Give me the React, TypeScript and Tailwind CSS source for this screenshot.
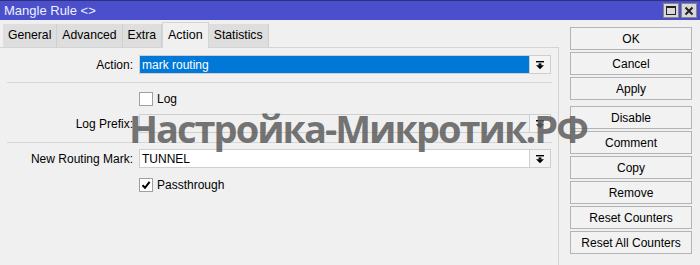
import React from "react";

const DropIcon = () => (
  <svg width="10" height="10" viewBox="0 0 10 10">
    <rect x="1" y="1" width="8" height="1.4" fill="#000" />
    <rect x="3.6" y="3.4" width="2.8" height="2" fill="#000" />
    <polygon points="1,5.2 9,5.2 5,9.2" fill="#000" />
  </svg>
);

const Field = ({ value, variant }: { value?: string; variant: "blue" | "white" | "disabled" }) => {
  const bg =
    variant === "blue"
      ? "bg-[#0078d7] text-white"
      : variant === "white"
      ? "bg-white text-black"
      : "bg-[#f0f0f0] text-black";
  return (
    <div className="flex h-[19px]">
      <div className={`w-[391px] h-[19px] border border-[#cfcfcf] flex items-center pl-[2px] ${bg}`}>
        {value}
      </div>
      <div className="w-[21px] h-[19px] border border-l-0 border-[#cfcfcf] bg-[#f4f4f4] flex items-center justify-center">
        <DropIcon />
      </div>
    </div>
  );
};

const Check = ({ checked }: { checked?: boolean }) => (
  <div className="w-[14px] h-[14px] bg-white border border-[#a0a0a0] flex items-center justify-center">
    {checked && (
      <svg width="10" height="10" viewBox="0 0 10 10">
        <path d="M1.5 5.2 L4 7.8 L8.6 1.8" stroke="#000" strokeWidth="2" fill="none" />
      </svg>
    )}
  </div>
);

const Btn = ({ label }: { label: string }) => (
  <div className="w-[122px] h-[23px] border border-[#b4b4b4] bg-[#f2f2f2] flex items-center justify-center text-black">
    {label}
  </div>
);

export default function App() {
  const tabs = ["General", "Advanced", "Extra", "Action", "Statistics"];
  return (
    <div
      className="w-[700px] h-[265px] bg-[#f0f0f0] relative overflow-hidden text-[12px] text-black"
      style={{ fontFamily: '"Liberation Sans", Arial, sans-serif' }}
    >
      {/* Title bar */}
      <div className="h-[20px] bg-[#4b4fcb] border-t border-[#2e2f80] flex items-center justify-between">
        <span className="pl-[4px] text-[13px] text-[#eef0ff]">Mangle Rule &lt;&gt;</span>
        <div className="flex gap-[2px] pr-[3px]">
          <div className="w-[16px] h-[15px] bg-[#d8d8d8] border border-[#888] flex items-center justify-center">
            <div className="w-[10px] h-[9px] border border-[#222] border-t-2"></div>
          </div>
          <div className="w-[16px] h-[15px] bg-[#d8d8d8] border border-[#888] flex items-center justify-center">
            <svg width="10" height="10" viewBox="0 0 10 10">
              <path d="M1.5 1.5 L8.5 8.5 M8.5 1.5 L1.5 8.5" stroke="#222" strokeWidth="2" />
            </svg>
          </div>
        </div>
      </div>

      <div className="flex h-[245px]">
        {/* Left */}
        <div className="w-[559px] flex flex-col">
          <div className="h-[27px] flex items-end pl-[3px]">
            {tabs.map((t) =>
              t === "Action" ? (
                <div
                  key={t}
                  className="h-[26px] px-[5px] bg-[#f0f0f0] border border-b-0 border-[#d4d4d4] flex items-center -mb-[1px] relative z-10 text-[12.5px]"
                >
                  {t}
                </div>
              ) : (
                <div
                  key={t}
                  className="h-[23px] px-[5px] bg-[#dedede] border-r border-[#cfcfcf] flex items-center text-[12.2px]"
                >
                  {t}
                </div>
              )
            )}
          </div>
          <div className="flex-1 border-t border-r border-[#d4d4d4] flex flex-col">
            <div className="mt-[7px] flex items-center">
              <div className="w-[134px] text-right pr-[1px]">Action:</div>
              <div className="ml-[5px]">
                <Field value="mark routing" variant="blue" />
              </div>
            </div>
            <div className="mt-[8px] ml-[7px] w-[545px] h-[1px] bg-[#d6d6d6]"></div>
            <div className="mt-[9px] ml-[139px] h-[14px] flex items-center gap-[4px]">
              <Check />
              <span>Log</span>
            </div>
            <div className="mt-[8px] flex items-center">
              <div className="w-[134px] text-right pr-[1px]">Log Prefix:</div>
              <div className="ml-[5px]">
                <Field variant="disabled" />
              </div>
            </div>
            <div className="mt-[9px] ml-[7px] w-[545px] h-[1px] bg-[#d6d6d6]"></div>
            <div className="mt-[6px] flex items-center">
              <div className="w-[134px] text-right pr-[1px]">New Routing Mark:</div>
              <div className="ml-[5px]">
                <Field value="TUNNEL" variant="white" />
              </div>
            </div>
            <div className="mt-[10px] ml-[139px] h-[14px] flex items-center gap-[4px]">
              <Check checked />
              <span>Passthrough</span>
            </div>
          </div>
        </div>

        {/* Right */}
        <div className="pl-[11px] pt-[7px] flex flex-col gap-[2px]">
          <Btn label="OK" />
          <Btn label="Cancel" />
          <Btn label="Apply" />
          <div className="h-[2px]"></div>
          <Btn label="Disable" />
          <Btn label="Comment" />
          <Btn label="Copy" />
          <Btn label="Remove" />
          <Btn label="Reset Counters" />
          <Btn label="Reset All Counters" />
        </div>
      </div>

      {/* Watermark overlay */}
      <div
        className="absolute left-[129px] top-[109px] text-[38px] font-bold tracking-[-2px] text-[#5c5c5c]/85 whitespace-nowrap leading-none"
        style={{ fontFamily: '"Open Sans", "Noto Sans", sans-serif' }}
      >
        Настройка-Микротик.РФ
      </div>
    </div>
  );
}
